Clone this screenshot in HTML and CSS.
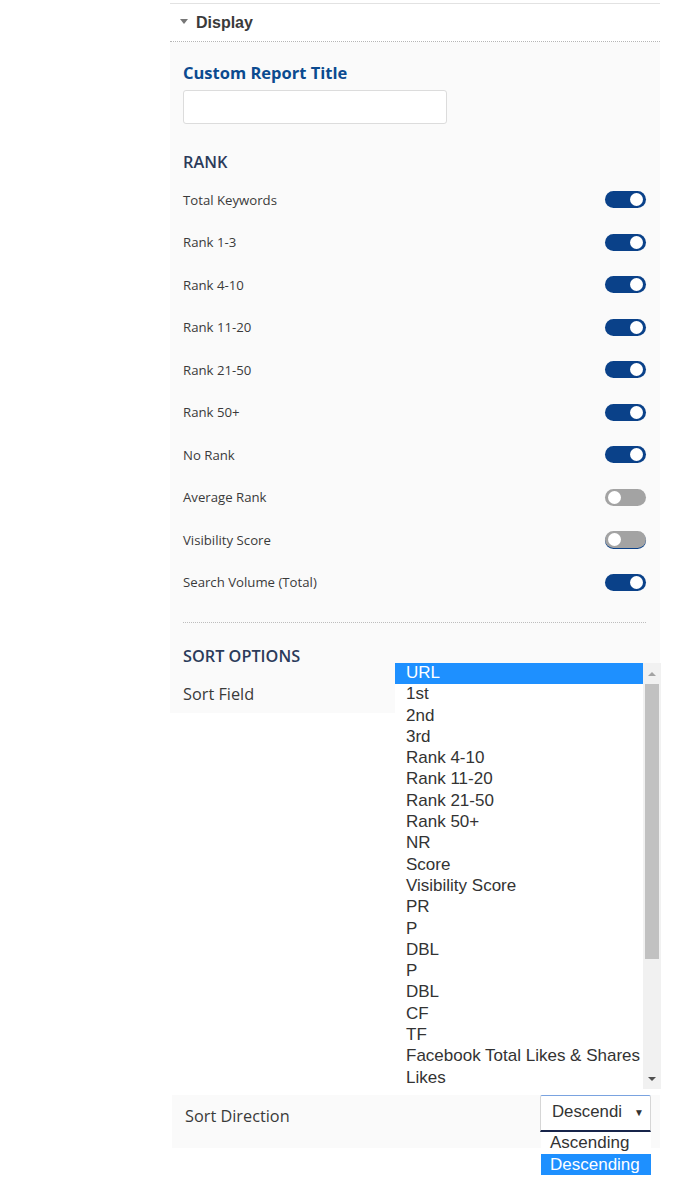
FILE: index.html
```html
<!DOCTYPE html>
<html>
<head>
<meta charset="utf-8">
<link rel="stylesheet" href="styles.css">
</head>
<body>
<div class="page">
  <div class="section-head">
    <span class="caret"></span>
    <span class="head-title">Display</span>
  </div>
  <div class="panel">
    <div class="field-title">Custom Report Title</div>
    <div class="text-input"></div>
    <div class="group-title rank-title">RANK</div>
    <div class="rows">
      <div class="row"><span class="row-label">Total Keywords</span><span class="toggle on"></span></div>
      <div class="row"><span class="row-label">Rank 1-3</span><span class="toggle on"></span></div>
      <div class="row"><span class="row-label">Rank 4-10</span><span class="toggle on"></span></div>
      <div class="row"><span class="row-label">Rank 11-20</span><span class="toggle on"></span></div>
      <div class="row"><span class="row-label">Rank 21-50</span><span class="toggle on"></span></div>
      <div class="row"><span class="row-label">Rank 50+</span><span class="toggle on"></span></div>
      <div class="row"><span class="row-label">No Rank</span><span class="toggle on"></span></div>
      <div class="row"><span class="row-label">Average Rank</span><span class="toggle off"></span></div>
      <div class="row"><span class="row-label">Visibility Score</span><span class="toggle off edge"></span></div>
      <div class="row"><span class="row-label">Search Volume (Total)</span><span class="toggle on"></span></div>
    </div>
    <div class="divider"></div>
    <div class="group-title sort-title">SORT OPTIONS</div>
    <div class="sort-field">Sort Field</div>
  </div>
  <div class="gap"></div>
  <div class="direction-row">
    <span class="direction-label">Sort Direction</span>
    <div class="select-wrap">
      <div class="select"><span class="select-text">Descendi</span><span class="select-arrow">▼</span></div>
      <div class="select-options">
        <div class="sopt">Ascending</div>
        <div class="sopt selected">Descending</div>
      </div>
    </div>
  </div>

  <div class="listbox">
    <div class="list-items">
      <div class="item selected">URL</div>
      <div class="item">1st</div>
      <div class="item">2nd</div>
      <div class="item">3rd</div>
      <div class="item">Rank 4-10</div>
      <div class="item">Rank 11-20</div>
      <div class="item">Rank 21-50</div>
      <div class="item">Rank 50+</div>
      <div class="item">NR</div>
      <div class="item">Score</div>
      <div class="item">Visibility Score</div>
      <div class="item">PR</div>
      <div class="item">P</div>
      <div class="item">DBL</div>
      <div class="item">P</div>
      <div class="item">DBL</div>
      <div class="item">CF</div>
      <div class="item">TF</div>
      <div class="item">Facebook Total Likes &amp; Shares</div>
      <div class="item">Likes</div>
    </div>
    <div class="scrollbar">
      <div class="sb-btn up"><span class="tri-up"></span></div>
      <div class="sb-track">
        <div class="sb-thumb"></div>
      </div>
      <div class="sb-btn down"><span class="tri-down"></span></div>
    </div>
  </div>
</div>
</body>
</html>
```

FILE: styles.css
```css
html, body {
  margin: 0;
  padding: 0;
  background: #ffffff;
}

.page {
  position: relative;
  width: 679px;
  height: 1188px;
  font-family: "Open Sans", "Liberation Sans", sans-serif;
}

.section-head {
  margin-left: 170px;
  margin-top: 3px;
  width: 490px;
  height: 37px;
  border-top: 1px solid #e2e2e2;
  border-bottom: 1px dotted #b5b5b5;
  display: flex;
  align-items: center;
}

.caret {
  width: 0;
  height: 0;
  border-left: 4px solid transparent;
  border-right: 4px solid transparent;
  border-top: 5px solid #777;
  margin-left: 10px;
  margin-right: 8px;
  margin-top: -2px;
}

.head-title {
  font-family: "Liberation Sans", Arial, sans-serif;
  font-weight: bold;
  font-size: 16px;
  color: #3a3a3a;
}

.panel {
  margin-left: 170px;
  width: 490px;
  box-sizing: border-box;
  background: #fafafa;
  padding: 20px 14px 8px 13px;
}

.field-title {
  font-size: 16.5px;
  line-height: 22px;
  font-weight: 700;
  color: #0b4a8f;
}

.text-input {
  margin-top: 6px;
  width: 264px;
  height: 34px;
  box-sizing: border-box;
  background: #fff;
  border: 1px solid #dcdcdc;
  border-radius: 3px;
}

.group-title {
  font-size: 16.3px;
  line-height: 22px;
  font-weight: 600;
  color: #2b3b5a;
}

.rank-title {
  margin-top: 27px;
}

.rows {
  margin-top: 5.5px;
}

.row {
  height: 42.5px;
  display: flex;
  align-items: center;
  justify-content: space-between;
}

.row-label {
  font-size: 13.2px;
  color: #3a3a3a;
}

.toggle {
  position: relative;
  width: 41px;
  height: 17px;
  border-radius: 9px;
  background: #0a4189;
}

.toggle::after {
  content: "";
  position: absolute;
  top: 2px;
  width: 13px;
  height: 13px;
  border-radius: 50%;
  background: #fff;
}

.toggle.on::after {
  right: 3px;
}

.toggle.off {
  background: #a3a3a3;
}

.toggle.off::after {
  left: 3px;
}

.toggle.edge {
  box-shadow: 0 1px 0 0 #0a4189;
}

.divider {
  margin-top: 18.5px;
  border-top: 1px dotted #bdbdbd;
}

.sort-title {
  margin-top: 22px;
}

.sort-field {
  margin-top: 16px;
  font-size: 16.3px;
  line-height: 22px;
  color: #3a3a3a;
}

.gap {
  height: 382px;
}

.direction-row {
  margin-left: 172px;
  width: 488px;
  height: 53px;
  background: #fafafa;
  display: flex;
  align-items: flex-start;
  justify-content: space-between;
  box-sizing: border-box;
  padding-left: 13px;
  padding-right: 9px;
}

.direction-label {
  margin-top: 10px;
  font-size: 16.3px;
  line-height: 22px;
  color: #3a3a3a;
}

.select-wrap {
  display: flex;
  flex-direction: column;
}

.select {
  width: 111px;
  height: 37px;
  box-sizing: border-box;
  background: #fff;
  border: 1px solid #d6d6d6;
  border-top-color: #7aa3e0;
  border-bottom: 2px solid #17244a;
  border-radius: 2px 2px 0 0;
  display: flex;
  align-items: center;
  justify-content: space-between;
  padding: 0 6px 2px 11px;
  font-family: "Liberation Sans", Arial, sans-serif;
  font-size: 16.8px;
  color: #333;
}

.select-arrow {
  font-size: 10px;
  color: #333;
}

.select-options {
  width: 110px;
  background: #fff;
  font-family: "Liberation Sans", Arial, sans-serif;
  font-size: 17px;
  color: #333;
  margin-left: 1px;
}

.sopt {
  height: 21.5px;
  line-height: 21px;
  padding-left: 9px;
}

.sopt.selected {
  background: #1e90ff;
  color: #fff;
}

.listbox {
  position: absolute;
  left: 395px;
  top: 660px;
  width: 266px;
  height: 426px;
  background: #fff;
  display: flex;
  font-family: "Liberation Sans", Arial, sans-serif;
  font-size: 17px;
  color: #333;
}

.list-items {
  flex: 1;
}

.item {
  height: 21.3px;
  line-height: 19px;
  padding-left: 11px;
  white-space: nowrap;
}

.item.selected {
  background: #1e90ff;
  color: #fff;
}

.scrollbar {
  width: 18px;
  display: flex;
  flex-direction: column;
  background: #f1f1f1;
}

.sb-btn {
  height: 21px;
  display: flex;
  align-items: center;
  justify-content: center;
  background: #f1f1f1;
}

.tri-up {
  width: 0;
  height: 0;
  border-left: 4px solid transparent;
  border-right: 4px solid transparent;
  border-bottom: 4px solid #a3a3a3;
}

.tri-down {
  width: 0;
  height: 0;
  border-left: 4px solid transparent;
  border-right: 4px solid transparent;
  border-top: 4px solid #505050;
}

.sb-track {
  flex: 1;
  padding: 0 2px;
}

.sb-thumb {
  height: 275px;
  background: #c1c1c1;
}
```
